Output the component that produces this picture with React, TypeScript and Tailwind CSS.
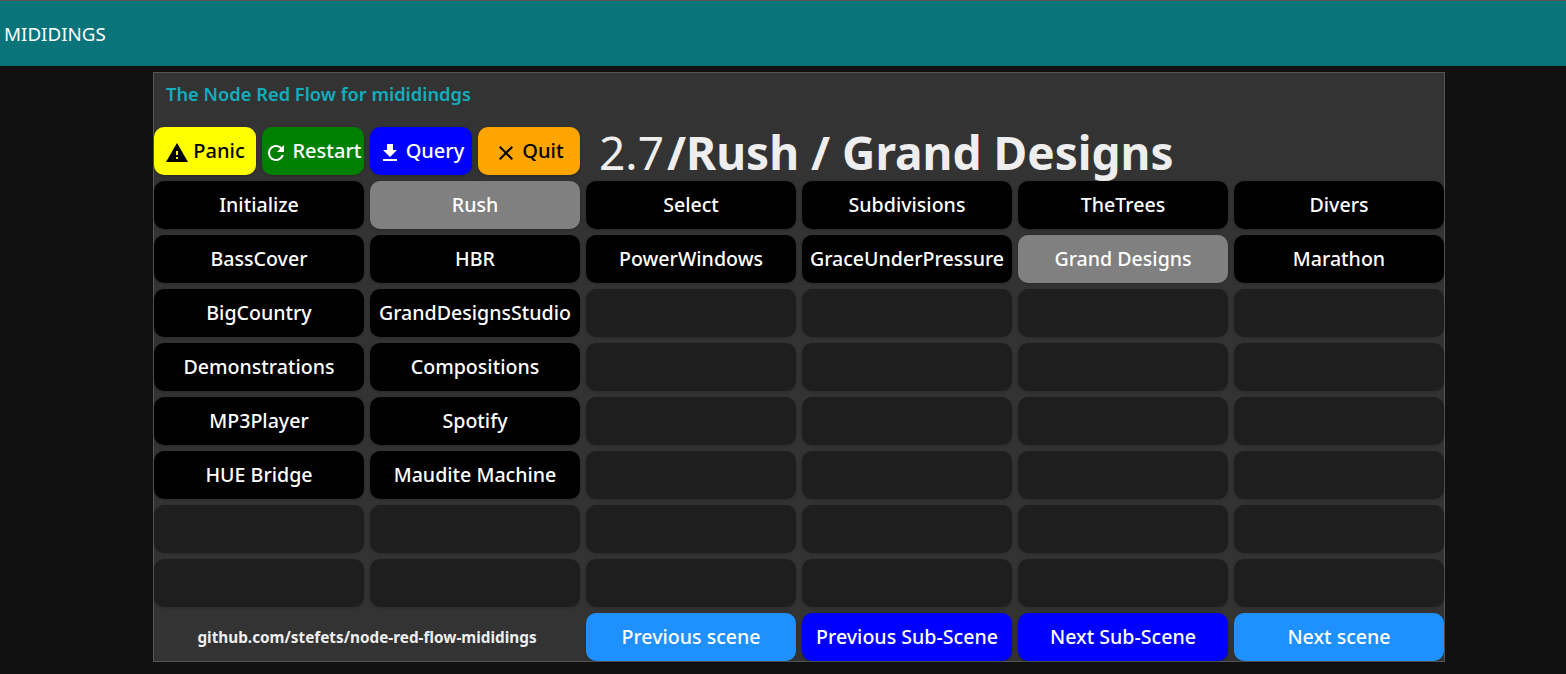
const FONT = "font-['Noto_Sans','Liberation_Sans',sans-serif]";

type Cell = { label?: string; active?: boolean };

const ROWS: string[][] = [
  ["Initialize", "Rush", "Select", "Subdivisions", "TheTrees", "Divers"],
  ["BassCover", "HBR", "PowerWindows", "GraceUnderPressure", "Grand Designs", "Marathon"],
  ["BigCountry", "GrandDesignsStudio", "", "", "", ""],
  ["Demonstrations", "Compositions", "", "", "", ""],
  ["MP3Player", "Spotify", "", "", "", ""],
  ["HUE Bridge", "Maudite Machine", "", "", "", ""],
  ["", "", "", "", "", ""],
  ["", "", "", "", "", ""],
];

const ACTIVE = ["Rush", "Grand Designs"];

function GridButton({ label, active }: Cell) {
  if (!label) {
    return <div className="h-12 rounded-[10px] bg-[#1e1e1e] shadow-[0_1px_3px_rgba(0,0,0,0.2)]" />;
  }
  return (
    <button
      className={`h-12 rounded-[10px] text-[19.6px] font-medium text-white whitespace-nowrap shadow-[0_1px_3px_rgba(0,0,0,0.2)] ${
        active ? "bg-[#808080]" : "bg-black"
      }`}
    >
      {label}
    </button>
  );
}

function Icon({ d }: { d: string }) {
  return (
    <svg viewBox="0 0 24 24" className="w-6 h-6 mt-1 shrink-0" fill="currentColor">
      <path d={d} />
    </svg>
  );
}

const ACTIONS = [
  {
    label: "Panic",
    cls: "bg-[#ffff00] text-black",
    d: "M1 21h22L12 2 1 21zm12-3h-2v-2h2v2zm0-4h-2v-4h2v4z",
  },
  {
    label: "Restart",
    cls: "bg-[#008000] text-white",
    d: "M17.65 6.35C16.2 4.9 14.21 4 12 4c-4.42 0-7.99 3.58-7.99 8s3.57 8 7.99 8c3.73 0 6.84-2.55 7.73-6h-2.08c-.82 2.33-3.04 4-5.65 4-3.31 0-6-2.69-6-6s2.69-6 6-6c1.66 0 3.14.69 4.22 1.78L13 11h7V4l-2.35 2.35z",
  },
  {
    label: "Query",
    cls: "bg-[#0000ff] text-white",
    d: "M19 9h-4V3H9v6H5l7 7 7-7zM5 18v2h14v-2H5z",
  },
  {
    label: "Quit",
    cls: "bg-[#ffa500] text-black",
    d: "M19 6.41L17.59 5 12 10.59 6.41 5 5 6.41 10.59 12 5 17.59 6.41 19 12 13.41 17.59 19 19 17.59 13.41 12z",
  },
];

const NAV = [
  { label: "Previous scene", cls: "bg-[#1e90ff]" },
  { label: "Previous Sub-Scene", cls: "bg-[#0000ff]" },
  { label: "Next Sub-Scene", cls: "bg-[#0000ff]" },
  { label: "Next scene", cls: "bg-[#1e90ff]" },
];

export default function App() {
  return (
    <div className={`min-h-screen overflow-hidden bg-[#111111] ${FONT}`}>
      <header className="h-[66px] border-t border-[#555555] bg-[#097479] flex items-center pl-1 pt-0.5 text-[18.8px] text-white">
        MIDIDINGS
      </header>

      <main className="ml-[153px] mt-1.5 w-[1292px] border border-[#555555] bg-[#333333]">
        <div className="h-[54px] pl-3 pt-[7px] text-[18.3px] font-semibold leading-[27px] text-[#12adbd]">
          The Node Red Flow for mididindgs
        </div>

        <div className="grid grid-cols-6 gap-1.5">
          <div className="col-span-2 grid grid-cols-4 gap-1.5">
            {ACTIONS.map((a) => (
              <button
                key={a.label}
                className={`h-12 rounded-[10px] flex items-center justify-center gap-1 text-[20px] font-medium whitespace-nowrap shadow-[0_1px_3px_rgba(0,0,0,0.2)] ${a.cls}`}
              >
                <Icon d={a.d} />
                {a.label}
              </button>
            ))}
          </div>
          <div className="col-span-4 h-12 pl-[13px] pt-0.5 flex items-center gap-[3px] whitespace-nowrap leading-none text-[#eeeeee]">
            <span className="text-[46px] font-normal">2.7</span>
            <span className="text-[46px] font-bold">/Rush / Grand Designs</span>
          </div>

          {ROWS.flat().map((label, i) => (
            <GridButton key={i} label={label} active={ACTIVE.includes(label)} />
          ))}

          <div className="col-span-2 h-12 flex items-center justify-center text-[15.3px] font-bold text-[#eeeeee]">
            github.com/stefets/node-red-flow-mididings
          </div>
          {NAV.map((n) => (
            <button
              key={n.label}
              className={`h-12 rounded-[10px] text-[19.6px] font-medium text-white whitespace-nowrap shadow-[0_1px_3px_rgba(0,0,0,0.2)] ${n.cls}`}
            >
              {n.label}
            </button>
          ))}
        </div>
      </main>
    </div>
  );
}
